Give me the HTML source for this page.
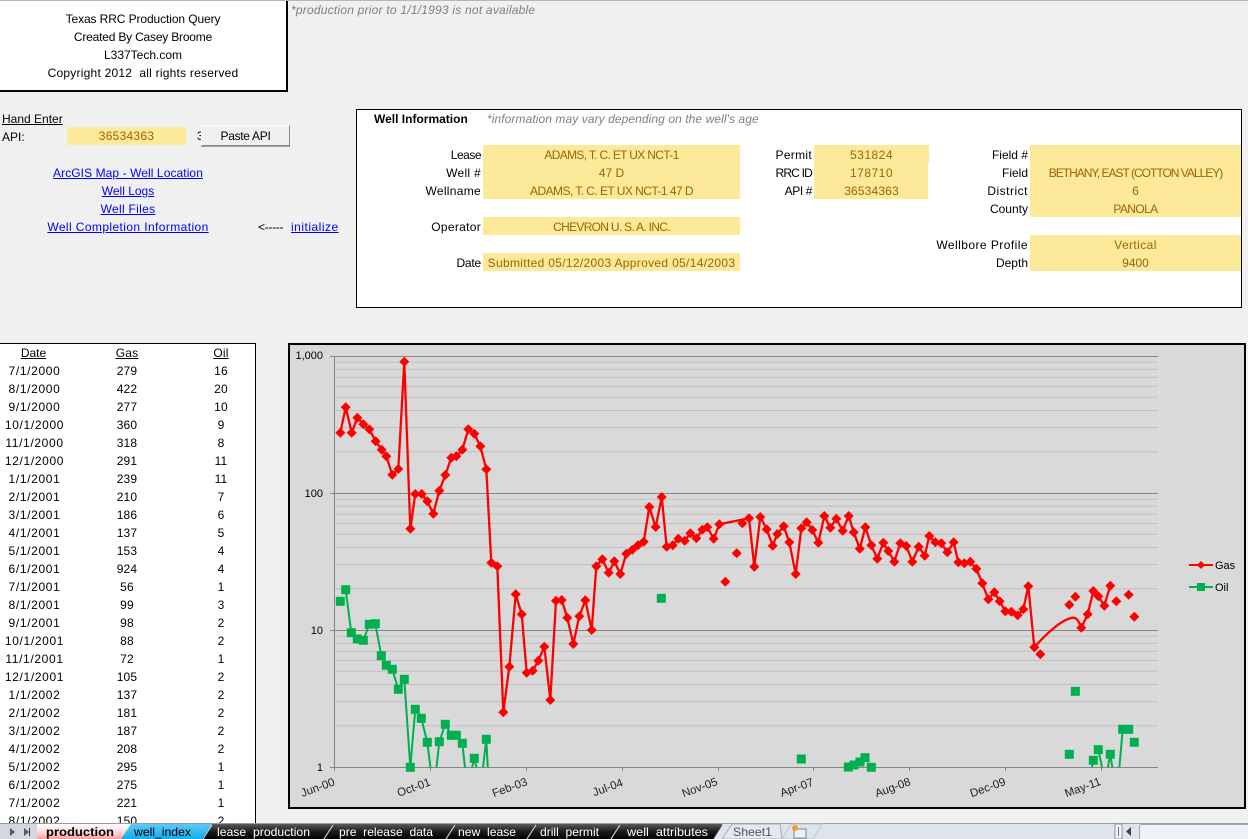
<!DOCTYPE html>
<html><head><meta charset="utf-8"><title>Texas RRC Production Query</title>
<style>
html,body{margin:0;padding:0}
body{width:1248px;height:839px;position:relative;overflow:hidden;background:#f0f0f0;font:12px/18px "Liberation Sans",sans-serif;color:#000}
.a{position:absolute}
.t{position:absolute;white-space:pre;height:18px;line-height:18px}
.c{text-align:center}.r{text-align:right}
.y{position:absolute;background:#fde99a}
.n{color:#9c6500}
.l{color:#0000ff;text-decoration:underline}
.u{text-decoration:underline}
.g{color:#7f7f7f;font-style:italic}
#tb .t{left:0;width:69px;text-align:center;letter-spacing:.65px}
#tb .t.u{letter-spacing:0;left:-1px}
#tb .g2{left:91px;width:72px;text-align:center;position:absolute;white-space:pre;letter-spacing:.2px}
#tb .o{left:190px;width:62px;text-align:center;position:absolute;white-space:pre;letter-spacing:.2px}
svg{position:absolute;left:0;top:0}
</style></head><body>
<div class="a" style="left:0;top:0;width:1248px;height:1px;background:#b5b7ba"></div>
<div class="a" style="left:0;top:1px;width:286px;height:89px;background:#fff;border-right:2px solid #000;border-bottom:2px solid #000"></div>
<div class="t c" style="left:0;width:286px;top:10px;letter-spacing:-.1px">Texas RRC Production Query</div>
<div class="t c" style="left:0;width:286px;top:28px;letter-spacing:-.2px">Created By Casey Broome</div>
<div class="t c" style="left:0;width:286px;top:46px">L337Tech.com</div>
<div class="t c" style="left:0;width:286px;top:64px;letter-spacing:.23px">Copyright 2012  all rights reserved</div>
<div class="t g" style="left:291px;top:1px;letter-spacing:.22px">*production prior to 1/1/1993 is not available</div>

<div class="t u" style="left:2px;top:110px">Hand Enter</div>
<div class="t" style="left:2px;top:128px">API:</div>
<div class="y" style="left:67px;top:127px;width:119px;height:18px"></div>
<div class="t c n" style="left:67px;width:119px;top:127px;letter-spacing:.25px">36534363</div>
<div class="t" style="left:197px;top:127px">3</div>
<div class="a" style="left:201px;top:125px;width:87px;height:19px;background:#f0f0f0;border:1px solid;border-color:#fff #8a8a8a #8a8a8a #fff;box-shadow:0 1px 0 #a0a0a0"></div>
<div class="t c" style="left:201px;width:89px;top:127px;letter-spacing:-.3px">Paste API</div>
<div class="t c l" style="left:28px;width:200px;top:164px;letter-spacing:.08px">ArcGIS Map - Well Location</div>
<div class="t c l" style="left:28px;width:200px;top:182px">Well Logs</div>
<div class="t c l" style="left:28px;width:200px;top:200px;letter-spacing:.3px">Well Files</div>
<div class="t c l" style="left:28px;width:200px;top:218px;letter-spacing:.4px">Well Completion Information</div>
<div class="t" style="left:258px;top:218px;letter-spacing:-.3px">&lt;-----</div>
<div class="t l" style="left:291px;top:218px;letter-spacing:.5px">initialize</div>

<div class="a" style="left:356px;top:109px;width:884px;height:197px;background:#fff;border:1px solid #000"></div>
<div class="t" style="left:374px;top:110px;font-weight:bold">Well Information</div>
<div class="t g" style="left:487px;top:110px;letter-spacing:.08px">*information may vary depending on the well's age</div>
<div class="y" style="left:483px;top:145px;width:257px;height:54px"></div>
<div class="y" style="left:483px;top:217px;width:257px;height:18px"></div>
<div class="y" style="left:483px;top:253px;width:257px;height:18px"></div>
<div class="y" style="left:814px;top:145px;width:115px;height:18px"></div>
<div class="y" style="left:814px;top:163px;width:114px;height:36px"></div>
<div class="y" style="left:1030px;top:145px;width:211px;height:72px"></div>
<div class="y" style="left:1030px;top:235px;width:211px;height:36px"></div>
<div class="t r" style="left:381px;width:100px;top:146px;letter-spacing:-.5px">Lease</div>
<div class="t r" style="left:381px;width:100px;top:164px;letter-spacing:.3px">Well #</div>
<div class="t r" style="left:381px;width:100px;top:182px;letter-spacing:.3px">Wellname</div>
<div class="t r" style="left:381px;width:100px;top:218px;letter-spacing:.3px">Operator</div>
<div class="t r" style="left:381px;width:100px;top:254px;letter-spacing:-.2px">Date</div>
<div class="t c n" style="left:483px;width:257px;top:146px;letter-spacing:-.67px">ADAMS, T. C. ET UX NCT-1</div>
<div class="t c n" style="left:483px;width:257px;top:164px">47 D</div>
<div class="t c n" style="left:483px;width:257px;top:182px;letter-spacing:-.55px">ADAMS, T. C. ET UX NCT-1 47 D</div>
<div class="t c n" style="left:483px;width:257px;top:218px;letter-spacing:-.7px">CHEVRON U. S. A. INC.</div>
<div class="t c n" style="left:483px;width:257px;top:254px;letter-spacing:.32px">Submitted 05/12/2003 Approved 05/14/2003</div>
<div class="t r" style="left:752px;width:60px;top:146px;letter-spacing:.3px">Permit</div>
<div class="t r" style="left:752px;width:60px;top:164px;letter-spacing:-.8px">RRC ID</div>
<div class="t r" style="left:752px;width:60px;top:182px;letter-spacing:-.4px">API #</div>
<div class="t c n" style="left:814px;width:115px;top:146px;letter-spacing:.5px">531824</div>
<div class="t c n" style="left:814px;width:115px;top:164px;letter-spacing:.5px">178710</div>
<div class="t c n" style="left:814px;width:115px;top:182px;letter-spacing:.15px">36534363</div>
<div class="t r" style="left:908px;width:120px;top:146px">Field #</div>
<div class="t r" style="left:908px;width:120px;top:164px">Field</div>
<div class="t r" style="left:908px;width:120px;top:182px;letter-spacing:.5px">District</div>
<div class="t r" style="left:908px;width:120px;top:200px">County</div>
<div class="t r" style="left:908px;width:120px;top:236px;letter-spacing:.45px">Wellbore Profile</div>
<div class="t r" style="left:908px;width:120px;top:254px">Depth</div>
<div class="t c n" style="left:1030px;width:211px;top:164px;letter-spacing:-1px">BETHANY, EAST (COTTON VALLEY)</div>
<div class="t c n" style="left:1030px;width:211px;top:182px">6</div>
<div class="t c n" style="left:1030px;width:211px;top:200px;letter-spacing:-.6px">PANOLA</div>
<div class="t c n" style="left:1030px;width:211px;top:236px;letter-spacing:.4px">Vertical</div>
<div class="t c n" style="left:1030px;width:211px;top:254px">9400</div>

<div id="tb" class="a" style="left:0;top:343px;width:255px;height:480px;background:#fff;border-top:1px solid #000;border-right:1px solid #000;overflow:hidden">
<div class="t u" style="top:0">Date</div><div class="g2 u" style="top:0">Gas</div><div class="o u" style="top:0">Oil</div>
<div class="t" style="top:18px">7/1/2000</div><div class="g2" style="top:18px">279</div><div class="o" style="top:18px">16</div>
<div class="t" style="top:36px">8/1/2000</div><div class="g2" style="top:36px">422</div><div class="o" style="top:36px">20</div>
<div class="t" style="top:54px">9/1/2000</div><div class="g2" style="top:54px">277</div><div class="o" style="top:54px">10</div>
<div class="t" style="top:72px">10/1/2000</div><div class="g2" style="top:72px">360</div><div class="o" style="top:72px">9</div>
<div class="t" style="top:90px">11/1/2000</div><div class="g2" style="top:90px">318</div><div class="o" style="top:90px">8</div>
<div class="t" style="top:108px">12/1/2000</div><div class="g2" style="top:108px">291</div><div class="o" style="top:108px">11</div>
<div class="t" style="top:126px">1/1/2001</div><div class="g2" style="top:126px">239</div><div class="o" style="top:126px">11</div>
<div class="t" style="top:144px">2/1/2001</div><div class="g2" style="top:144px">210</div><div class="o" style="top:144px">7</div>
<div class="t" style="top:162px">3/1/2001</div><div class="g2" style="top:162px">186</div><div class="o" style="top:162px">6</div>
<div class="t" style="top:180px">4/1/2001</div><div class="g2" style="top:180px">137</div><div class="o" style="top:180px">5</div>
<div class="t" style="top:198px">5/1/2001</div><div class="g2" style="top:198px">153</div><div class="o" style="top:198px">4</div>
<div class="t" style="top:216px">6/1/2001</div><div class="g2" style="top:216px">924</div><div class="o" style="top:216px">4</div>
<div class="t" style="top:234px">7/1/2001</div><div class="g2" style="top:234px">56</div><div class="o" style="top:234px">1</div>
<div class="t" style="top:252px">8/1/2001</div><div class="g2" style="top:252px">99</div><div class="o" style="top:252px">3</div>
<div class="t" style="top:270px">9/1/2001</div><div class="g2" style="top:270px">98</div><div class="o" style="top:270px">2</div>
<div class="t" style="top:288px">10/1/2001</div><div class="g2" style="top:288px">88</div><div class="o" style="top:288px">2</div>
<div class="t" style="top:306px">11/1/2001</div><div class="g2" style="top:306px">72</div><div class="o" style="top:306px">1</div>
<div class="t" style="top:324px">12/1/2001</div><div class="g2" style="top:324px">105</div><div class="o" style="top:324px">2</div>
<div class="t" style="top:342px">1/1/2002</div><div class="g2" style="top:342px">137</div><div class="o" style="top:342px">2</div>
<div class="t" style="top:360px">2/1/2002</div><div class="g2" style="top:360px">181</div><div class="o" style="top:360px">2</div>
<div class="t" style="top:378px">3/1/2002</div><div class="g2" style="top:378px">187</div><div class="o" style="top:378px">2</div>
<div class="t" style="top:396px">4/1/2002</div><div class="g2" style="top:396px">208</div><div class="o" style="top:396px">2</div>
<div class="t" style="top:414px">5/1/2002</div><div class="g2" style="top:414px">295</div><div class="o" style="top:414px">1</div>
<div class="t" style="top:432px">6/1/2002</div><div class="g2" style="top:432px">275</div><div class="o" style="top:432px">1</div>
<div class="t" style="top:450px">7/1/2002</div><div class="g2" style="top:450px">221</div><div class="o" style="top:450px">1</div>
<div class="t" style="top:468px">8/1/2002</div><div class="g2" style="top:468px">150</div><div class="o" style="top:468px">2</div>
</div>

<div class="a" style="left:288px;top:343px;width:954px;height:462px;background:#d9d9d9;border:2px solid #000"></div>
<svg width="1248" height="839" viewBox="0 0 1248 839" font-family="Liberation Sans, sans-serif" font-size="12">
<defs>
<marker id="dm" markerUnits="userSpaceOnUse" markerWidth="12" markerHeight="12" refX="6" refY="6"><path d="M6 1 11 6 6 11 1 6Z" fill="#f00"/></marker>
<marker id="sq" markerUnits="userSpaceOnUse" markerWidth="12" markerHeight="12" refX="6" refY="6"><rect x="1.5" y="1.5" width="9" height="9" fill="#00b050"/></marker>
<clipPath id="pc"><rect x="334" y="350" width="824" height="417.5"/></clipPath>
</defs>
<path fill="none" stroke="#bfbfbf" d="M334 725.8H1158M334 701.6H1158M334 684.5H1158M334 671.2H1158M334 660.4H1158M334 651.3H1158M334 643.3H1158M334 636.3H1158M334 588.8H1158M334 564.6H1158M334 547.5H1158M334 534.2H1158M334 523.4H1158M334 514.3H1158M334 506.3H1158M334 499.3H1158M334 451.8H1158M334 427.6H1158M334 410.5H1158M334 397.2H1158M334 386.4H1158M334 377.3H1158M334 369.3H1158M334 362.3H1158"/>
<path fill="none" stroke="#868686" d="M330 356.5H1158M330 493.5H1158M330 630.5H1158M330 767.5H1158M334.5 356V771M430.5 767V771M526.5 767V771M622.5 767V771M718.5 767V771M813.5 767V771M909.5 767V771M1005.5 767V771M1101.5 767V771"/>
<g fill="#000" text-anchor="end" font-size="11">
<text x="323" y="359">1,000</text><text x="323" y="497">100</text><text x="323" y="634">10</text><text x="323" y="771">1</text>
</g>
<g fill="#222" text-anchor="middle" font-size="11.5">
<text transform="translate(319 791) rotate(-20)">Jun-00</text>
<text transform="translate(415 791) rotate(-20)">Oct-01</text>
<text transform="translate(511 791) rotate(-20)">Feb-03</text>
<text transform="translate(609 791) rotate(-20)">Jul-04</text>
<text transform="translate(701 791) rotate(-20)">Nov-05</text>
<text transform="translate(798 791) rotate(-20)">Apr-07</text>
<text transform="translate(894 791) rotate(-20)">Aug-08</text>
<text transform="translate(989 791) rotate(-20)">Dec-09</text>
<text transform="translate(1084 791) rotate(-20)">May-11</text>
</g>
<g clip-path="url(#pc)">
<path fill="none" stroke="#00b050" stroke-width="2" stroke-linejoin="round" d="M345.7 589.7L351.3 632.7 357.3 639 363.3 640.3 369.3 624.3 375.3 623.7 381.3 655.7 386.3 665.3 392.3 669.3 398.3 689.3 404.3 679.3 410.3 767.3 415.3 709.3 421.3 718.3 427.3 742.3 431 772M436 772L439.3 741.7 445.3 724.3 451.3 735.3 456.3 735.3 462.3 743.3 465.5 772M471 772L474.3 758.3 477.5 772M482.5 772L486.3 739.3 488 772M1091 772L1093.3 760.3M1098.3 749.7L1103 772M1107 772L1110.3 754.3 1113 772M1119 772L1122.7 729.3 1128.7 729.3"/>
<path fill="none" stroke="#f00" stroke-width="2.3" stroke-linejoin="round" d="M340.3 432.7L345.7 407.3 351.7 432.7 357.3 417.7 363.3 424.3 369.3 429.3 375.7 441.3 381.7 449.7 386.3 456.3 392.3 474.7 398.3 469 404.3 361.7 410.3 528.7 415.3 494 421.7 494 427.3 501.3 433.3 513.7 439.3 490.7 445.3 475 451.3 457.7 456.3 456.3 462.3 449.7 468.3 429.3 474.3 433.7 480.3 446.3 486.3 469.3 491.3 562.7 497.3 566.3 503.3 712.3 509.3 666.7 515.7 594.3 521.7 614.3 526.7 672.7 532.7 670.7 538.3 660.7 544.3 646.7 550.3 700 556 600.7 561.7 600 567.3 617.7 573.3 644 579.3 616.3 585.3 600.3 591.7 630 596.3 566.3 602.3 559.3 608.7 572.7 614.3 561.3 620.3 574 626.3 553.7 632.3 549.7 638 545.3 643.7 541.7 649.3 507 655.7 527 661.7 497 666.7 546.7 672.7 545.3 678.3 538.7 684.7 540.7 690.3 533.3 696.3 538.3 702.3 529.7 707.3 527.3 713.7 538.7 719.3 524.3 749 518.3 754.3 566.7 760.3 517 766.7 529.3 772.7 545.7 777.3 534 783.7 526.3 789.3 542.3 795.7 574 801.3 528.3 806.7 522.3 812.3 530 818.3 542.7 824.3 516 830.3 527.7 836.3 518.7 842.7 530.7 848.7 516 853.7 532.3 859.8 548.8 865.3 527.3 871.3 545.3 877.3 558.7 883.3 542.7 888.3 551 894.3 561.7 900.3 543.3 906.3 546 912.3 561.7 918.7 546.7 924.7 555.7 929.3 536 935.3 542.3 941.3 543.3 947.3 552.3 953.7 542.3 958.3 562.3 964.3 563.3 970.3 561.7 976.3 568.7 982.3 583.3 988.3 599.3 994.3 592.3 999.7 601.3 1005.3 611.3 1011.3 611.7 1017.7 615.3 1023.3 609.3 1028.3 586.3 1034.3 647.3C1048 632 1062 619 1073 617.7 1077 617.5 1079 622 1081.3 627.7L1087.7 614.3 1093.3 591 1098.3 596.3 1104.3 605.7 1110.3 585.7"/>
<path fill="none" marker-start="url(#dm)" marker-mid="url(#dm)" marker-end="url(#dm)" d="M340.3 432.7L345.7 407.3 351.7 432.7 357.3 417.7 363.3 424.3 369.3 429.3 375.7 441.3 381.7 449.7 386.3 456.3 392.3 474.7 398.3 469 404.3 361.7 410.3 528.7 415.3 494 421.7 494 427.3 501.3 433.3 513.7 439.3 490.7 445.3 475 451.3 457.7 456.3 456.3 462.3 449.7 468.3 429.3 474.3 433.7 480.3 446.3 486.3 469.3 491.3 562.7 497.3 566.3 503.3 712.3 509.3 666.7 515.7 594.3 521.7 614.3 526.7 672.7 532.7 670.7 538.3 660.7 544.3 646.7 550.3 700 556 600.7 561.7 600 567.3 617.7 573.3 644 579.3 616.3 585.3 600.3 591.7 630 596.3 566.3 602.3 559.3 608.7 572.7 614.3 561.3 620.3 574 626.3 553.7 632.3 549.7 638 545.3 643.7 541.7 649.3 507 655.7 527 661.7 497 666.7 546.7 672.7 545.3 678.3 538.7 684.7 540.7 690.3 533.3 696.3 538.3 702.3 529.7 707.3 527.3 713.7 538.7 719.3 524.3 725.3 581.7 736.7 553.3 742.3 523.3 749 518.3 754.3 566.7 760.3 517 766.7 529.3 772.7 545.7 777.3 534 783.7 526.3 789.3 542.3 795.7 574 801.3 528.3 806.7 522.3 812.3 530 818.3 542.7 824.3 516 830.3 527.7 836.3 518.7 842.7 530.7 848.7 516 853.7 532.3 859.8 548.8 865.3 527.3 871.3 545.3 877.3 558.7 883.3 542.7 888.3 551 894.3 561.7 900.3 543.3 906.3 546 912.3 561.7 918.7 546.7 924.7 555.7 929.3 536 935.3 542.3 941.3 543.3 947.3 552.3 953.7 542.3 958.3 562.3 964.3 563.3 970.3 561.7 976.3 568.7 982.3 583.3 988.3 599.3 994.3 592.3 999.7 601.3 1005.3 611.3 1011.3 611.7 1017.7 615.3 1023.3 609.3 1028.3 586.3 1034.3 647.3 1040.3 654.3 1069.3 604.7 1075.3 596.7 1081.3 627.7 1087.7 614.3 1093.3 591 1098.3 596.3 1104.3 605.7 1110.3 585.7 1116.3 601.3 1128.7 594.7 1134.3 616.7" stroke="none"/>
</g>
<path fill="none" marker-start="url(#sq)" marker-mid="url(#sq)" marker-end="url(#sq)" d="M340.3 601.3L345.7 589.7 351.3 632.7 357.3 639 363.3 640.3 369.3 624.3 375.3 623.7 381.3 655.7 386.3 665.3 392.3 669.3 398.3 689.3 404.3 679.3 410.3 767.3 415.3 709.3 421.3 718.3 427.3 742.3 439.3 741.7 445.3 724.3 451.3 735.3 456.3 735.3 462.3 743.3 474.3 758.3 486.3 739.3 661.3 598.3 801.3 759 848.3 767 854 765 860 762 865 757.7 871.3 767.3 1069.3 754.3 1075.3 691.3 1093.3 760.3 1098.3 749.7 1110.3 754.3 1122.7 729.3 1128.7 729.3 1134.3 742.3" stroke="none"/>
<path stroke="#f00" stroke-width="2" d="M1189 565H1213"/><path fill="#f00" d="M1201 561 1205 565 1201 569 1197 565Z"/>
<path stroke="#00b050" stroke-width="2" d="M1189 587H1213"/><rect x="1197" y="583" width="8" height="8" fill="#00b050"/>
<text x="1215" y="569" font-size="11">Gas</text><text x="1215" y="591" font-size="11">Oil</text>

<rect x="0" y="823" width="1248" height="16" fill="#dee3ec"/>
<rect x="0" y="823" width="1248" height="1" fill="#9a9da1"/>
<rect x="0" y="824" width="37" height="15" fill="#d3d8e0"/>
<path fill="#5a5a5a" d="M10 828 15 832 10 836ZM24 828 29 832 24 836Z"/><rect x="29" y="828" width="1" height="8" fill="#333"/>
<defs><linearGradient id="pk" x1="0" y1="0" x2="0" y2="1"><stop offset="0" stop-color="#fff"/><stop offset=".6" stop-color="#ffd4d4"/><stop offset="1" stop-color="#ff9a9a"/></linearGradient>
<linearGradient id="bl" x1="0" y1="0" x2="0" y2="1"><stop offset="0" stop-color="#5cc8f5"/><stop offset="1" stop-color="#12aeee"/></linearGradient>
<linearGradient id="bk" x1="0" y1="0" x2="0" y2="1"><stop offset="0" stop-color="#5a5a5a"/><stop offset=".5" stop-color="#1c1c1c"/><stop offset="1" stop-color="#000"/></linearGradient></defs>
<path d="M722 839 732 824H780L782 839Z" fill="#e4e8ef" stroke="#a8adb5"/>
<path d="M782 839 791 824H822L813 839Z" fill="none" stroke="#bcc1c9"/>
<path d="M610 839 620 824H722V826L714 839Z" fill="url(#bk)"/>
<path d="M526 839 536 824H620L610 839Z" fill="url(#bk)"/>
<path d="M445 839 455 824H536L526 839Z" fill="url(#bk)"/>
<path d="M323 839 333 824H455L445 839Z" fill="url(#bk)"/>
<path d="M202 839 212 824H333L323 839Z" fill="url(#bk)"/>
<path d="M121 839 131 824H212L202 839Z" fill="url(#bl)"/>
<path d="M37 839V824H131L121 839Z" fill="url(#pk)"/>
<path fill="none" stroke="#d6dbe3" d="M203 839 212 825M324 839 333 825M446 839 455 825M527 839 536 825M611 839 620 825M714 839 723 825"/>
<g font-size="12">
<text x="46" y="836" font-weight="bold" textLength="68" lengthAdjust="spacingAndGlyphs" fill="#000">production</text>
<text x="134" y="836" textLength="57" lengthAdjust="spacingAndGlyphs" fill="#000">well_index</text>
<text x="217" y="836" textLength="93" lengthAdjust="spacingAndGlyphs" fill="#fff">lease<tspan fill="#222">_</tspan>production</text>
<text x="339" y="836" textLength="94" lengthAdjust="spacingAndGlyphs" fill="#fff">pre<tspan fill="#222">_</tspan>release<tspan fill="#222">_</tspan>data</text>
<text x="458" y="836" textLength="58" lengthAdjust="spacingAndGlyphs" fill="#fff">new<tspan fill="#222">_</tspan>lease</text>
<text x="540" y="836" textLength="59" lengthAdjust="spacingAndGlyphs" fill="#fff">drill<tspan fill="#222">_</tspan>permit</text>
<text x="627" y="836" textLength="81" lengthAdjust="spacingAndGlyphs" fill="#fff">well<tspan fill="#222">_</tspan>attributes</text>
<text x="733" y="836" textLength="39" lengthAdjust="spacingAndGlyphs" fill="#555">Sheet1</text>
</g>
<rect x="794" y="829" width="12" height="9" fill="#eef2f8" stroke="#7a8699"/><circle cx="795" cy="828" r="3" fill="#f2a020"/>
<rect x="1115" y="824" width="7" height="15" fill="#f4f6f9" stroke="#8a93a0"/><rect x="1118" y="827" width="1" height="9" fill="#666"/>
<path fill="#444" d="M1131 827V836L1126 831.5Z"/>
<rect x="1139.5" y="824.5" width="120" height="16" rx="2" fill="#eef1f6" stroke="#a0a8b4"/>
</svg>
</body></html>
